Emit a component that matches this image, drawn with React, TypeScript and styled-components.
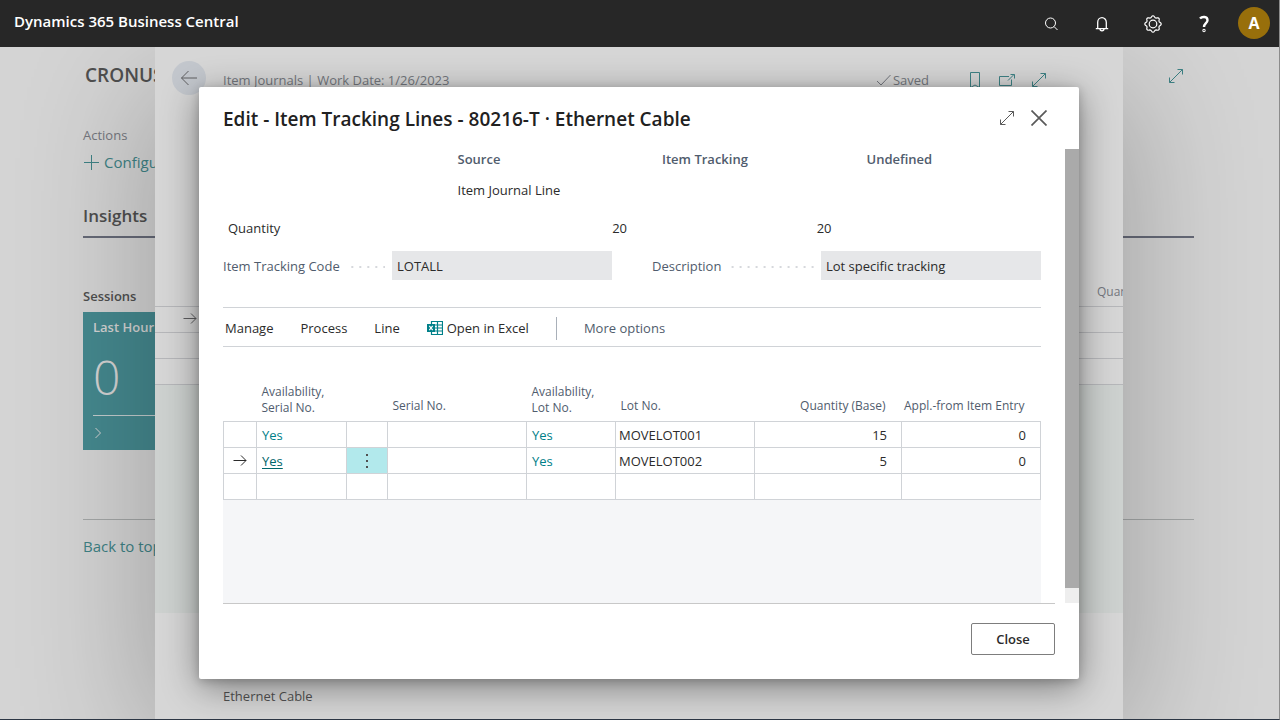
import React from "react";
import styled, { createGlobalStyle } from "styled-components";

const GlobalStyle = createGlobalStyle`
  *, *::before, *::after { box-sizing: border-box; }
  body { margin: 0; background: #d4d4d4; }
  body, button, input, table { font-family: "Open Sans", "Noto Sans", sans-serif; font-size: 13px; line-height: 20px; }
  h1, h2, h3, p { margin: 0; }
  svg { display: block; flex: none; }
`;

/* ---------- Shell ---------- */

const Shell = styled.div`
  display: flex;
  flex-direction: column;
  min-height: 100vh;
  border-right: 1px solid #8c8c8c;
  border-bottom: 1px solid #2c3644;
  color: #2b2b2b;
`;

const TopBar = styled.header`
  display: flex;
  align-items: center;
  justify-content: space-between;
  height: 47px;
  padding: 0 9px 0 14px;
  background: #272727;
  color: #fff;
`;

const Product = styled.h1`
  padding-bottom: 6px;
  font-size: 15px;
  font-weight: 600;
`;

const TopActions = styled.nav`
  display: flex;
  align-items: center;
  gap: 23px;
`;

const IconButton = styled.button<{ $size?: number }>`
  display: flex;
  align-items: center;
  justify-content: center;
  width: ${(p) => p.$size ?? 28}px;
  height: ${(p) => p.$size ?? 28}px;
  padding: 0;
  border: 0;
  background: none;
  color: inherit;
`;

const Avatar = styled.button`
  width: 32px;
  height: 32px;
  margin: 0 0 2px -3px;
  padding: 0;
  border: 0;
  border-radius: 50%;
  background: #986f0b;
  color: #fff;
  font-size: 16px;
  font-weight: 700;
`;

const Stage = styled.div`
  position: relative;
  flex: 1;
  overflow: hidden;
`;

/* ---------- Role center ---------- */

const Home = styled.div`
  min-height: 672px;
  padding: 16px 85px 0 83px;
  background: #d4d4d4;
`;

const HomeHead = styled.div`
  display: flex;
  justify-content: space-between;
  align-items: center;
  padding: 0 6px 0 2px;
  color: #3e8285;
`;

const Company = styled.h2`
  padding-bottom: 2px;
  color: #4f4f4f;
  font-size: 19px;
  font-weight: 600;
  line-height: 24px;
`;

const ActionsLabel = styled.p`
  margin-top: 36px;
  color: #74777e;
`;

const HomeLink = styled.a`
  display: flex;
  align-items: center;
  gap: 5px;
  width: max-content;
  color: #3e8285;
  font-size: 15px;
  line-height: 24px;
  text-decoration: none;
`;

const ConfigureLink = styled(HomeLink)`
  margin-top: 5px;
`;

const Insights = styled.h3`
  margin-top: 30px;
  padding-bottom: 8px;
  border-bottom: 2px solid #666a78;
  color: #4f4f4f;
  font-size: 17px;
  font-weight: 600;
  line-height: 24px;
`;

const TileLabel = styled.p`
  margin-top: 48px;
  color: #4f4f4f;
  font-weight: 600;
`;

const Tile = styled.div`
  width: 140px;
  height: 138px;
  margin-top: 6px;
  padding: 5px 0 0 10px;
  background: #45898f;
  color: #d4d4d4;
`;

const TileTitle = styled.p`
  font-weight: 600;
`;

const TileValue = styled.p`
  height: 79px;
  border-bottom: 1px solid #c3cdce;
  font-size: 48px;
  font-weight: 300;
  line-height: 80px;
`;

const TileMore = styled.div`
  padding-top: 10px;
`;

const HomeFoot = styled.div`
  margin-top: 69px;
  padding-top: 14px;
  border-top: 1px solid #a4a7a7;
`;

/* ---------- Journal sheet behind the dialog ---------- */

const Sheet = styled.section`
  position: absolute;
  inset: 0 156px 0 155px;
  overflow: hidden;
  background: #d6d6d6;
`;

const SheetShadow = styled.div`
  position: absolute;
  inset: 40px 156px 0 155px;
  box-shadow: 0 10px 120px 10px rgba(0, 0, 0, 0.24);
`;

const SheetHead = styled.div`
  display: flex;
  align-items: center;
  height: 34px;
  margin-top: 14px;
  padding: 0 76px 0 17px;
  color: #73767d;
`;

const BackButton = styled(IconButton)`
  margin-right: 17px;
  border-radius: 50%;
  background: #c3c7cd;
  color: #5e5e60;
`;

const SheetTitle = styled.h2`
  flex: 1;
  padding-top: 4px;
  font-size: 13px;
  font-weight: 400;
`;

const Saved = styled.span`
  display: flex;
  align-items: center;
  gap: 2px;
  padding-top: 4px;
`;

const SheetTools = styled.div`
  display: flex;
  gap: 16px;
  margin-left: 38px;
  padding-top: 4px;
  color: #3e8285;
`;

const SheetTable = styled.table`
  width: 100%;
  margin-top: 179px;
  border-collapse: collapse;
  table-layout: fixed;

  th {
    height: 32px;
    padding: 4px 0 0 19px;
    color: #74777e;
    font-size: 12px;
    font-weight: 400;
    text-align: left;
    white-space: nowrap;
  }
  td {
    height: 26px;
    padding: 0 0 0 28px;
    border: 1px solid #b6b7ba;
    border-width: 1px 0;
    color: #5e5e60;
  }
`;

const SheetFiller = styled.div`
  height: 228px;
  background: #cdd1cf;
`;

const SheetFoot = styled.p`
  padding: 73px 0 0 68px;
  color: #525252;
`;

/* ---------- Dialog ---------- */

const Dialog = styled.section`
  position: absolute;
  inset: 40px 200px auto 199px;
  background: #fff;
  border-radius: 2px;
  box-shadow: 0 8px 36px rgba(0, 0, 0, 0.42), 0 2px 10px rgba(0, 0, 0, 0.2);
`;

const DialogHead = styled.div`
  display: flex;
  align-items: center;
  height: 62px;
  padding: 0 25px 0 24px;
`;

const DialogTitle = styled.h2`
  flex: 1;
  padding-top: 2px;
  color: #212121;
  font-size: 19px;
  font-weight: 600;
  line-height: 24px;
`;

const DialogTools = styled.div`
  display: flex;
  gap: 2px;
  color: #5a5a5a;
`;

const DialogScroll = styled.div`
  display: flex;
`;

const DialogBody = styled.div`
  flex: 1;
  min-width: 0;
  padding: 0 24px;
`;

const ScrollTrack = styled.div`
  display: flex;
  width: 14px;
  padding-bottom: 15px;
  background: #eee;
`;

const ScrollThumb = styled.div`
  flex: 1;
  background: #aaa;
`;

const Matrix = styled.table`
  width: 100%;
  border-collapse: collapse;
  table-layout: fixed;

  th, td { padding: 0 5px 0 30px; text-align: left; }
  th { color: #505c6d; font-weight: 600; }
  tbody th { padding-left: 5px; color: #2b2b2b; font-weight: 400; }
`;

const MatrixRow = styled.tr<{ $height: number }>`
  height: ${(p) => p.$height}px;
`;

const MatrixNumber = styled.td`
  && { text-align: right; }
`;

const Fields = styled.div`
  display: grid;
  grid-template-columns: 1fr 1fr;
  gap: 40px;
  margin-top: 7px;
`;

const Field = styled.div`
  display: flex;
  align-items: center;
`;

const FieldLabel = styled.label`
  color: #505c6d;
`;

const Leader = styled.span`
  flex: 1;
  height: 2px;
  margin: 2px 7px 0 8px;
  background: linear-gradient(to left, #d6d8dc 2px, transparent 2px) right top / 8px 2px repeat-x;
`;

const FieldInput = styled.input`
  width: 220px;
  height: 29px;
  padding: 0 5px;
  border: 0;
  border-radius: 0;
  outline: 0;
  background: #e6e7e9;
  color: #2b2b2b;
`;

const Toolbar = styled.div`
  display: flex;
  align-items: center;
  gap: 27px;
  height: 40px;
  margin-top: 27px;
  padding: 2px 0 0 2px;
  border: 1px solid #d0d3d7;
  border-width: 1px 0;
`;

const ToolButton = styled.button<{ $muted?: boolean }>`
  display: flex;
  align-items: center;
  gap: 4px;
  padding: 0;
  border: 0;
  background: none;
  color: ${(p) => (p.$muted ? "#505c6d" : "#2b2b2b")};
`;

const Divider = styled.span`
  width: 1px;
  height: 23px;
  background: #a9b0b9;
`;

const LinesArea = styled.div`
  min-height: 256px;
  background: #f5f6f8;
`;

const Lines = styled.table`
  width: 100%;
  border-collapse: collapse;
  table-layout: fixed;
  background: #fff;
`;

const HeadCell = styled.th<{ $end?: boolean; $tall?: boolean }>`
  height: 74px;
  padding: 0 ${(p) => (p.$end ? 16 : 0)}px ${(p) => (p.$tall ? 5 : 7)}px ${(p) => (p.$end ? 0 : 5)}px;
  color: #505c6d;
  font-size: 12px;
  font-weight: 400;
  line-height: 16px;
  text-align: ${(p) => (p.$end ? "right" : "left")};
  vertical-align: bottom;
  white-space: nowrap;
`;

const Cell = styled.td<{ $end?: boolean; $pad?: number; $active?: boolean }>`
  height: 26px;
  padding: 1px ${(p) => (p.$end ? 14 : 0)}px 0 ${(p) => p.$pad ?? 5}px;
  border: 1px solid #d0d3d7;
  background: ${(p) => (p.$active ? "#b2e9ec" : "#fff")};
  text-align: ${(p) => (p.$end ? "right" : "left")};
`;

const YesLink = styled.a<{ $focused?: boolean }>`
  color: ${(p) => (p.$focused ? "#00666a" : "#008089")};
  text-decoration: ${(p) => (p.$focused ? "underline" : "none")};
  text-underline-offset: 2px;
`;

const RowMenu = styled(IconButton)`
  width: 100%;
  height: 22px;
  color: #505050;
`;

const DialogFoot = styled.div`
  display: flex;
  justify-content: flex-end;
  margin: 0 24px;
  padding: 19px 0 24px;
  border-top: 1px solid #c8c8c8;
`;

const CloseButton = styled.button`
  width: 84px;
  height: 32px;
  padding: 0;
  border: 1px solid #7d7d7d;
  border-radius: 2px;
  background: #fff;
  color: #2b2b2b;
  font-weight: 600;
`;

/* ---------- Icons ---------- */

type IconProps = { w?: number; h?: number; sw?: number; children: React.ReactNode };

const Icon = ({ w = 16, h = 16, sw = 1, children }: IconProps) => (
  <svg width={w} height={h} viewBox={`0 0 ${w} ${h}`} fill="none" stroke="currentColor" strokeWidth={sw} aria-hidden="true">
    {children}
  </svg>
);

const ExpandIcon = () => (
  <Icon>
    <path d="M1.5 14.5 14.5 1.5M9.5 1.5h5v5M1.5 9.5v5h5" />
  </Icon>
);

const ArrowRight = () => (
  <Icon w={14} h={12}>
    <path d="M.5 5.500h12.500M8 .5l5 5-5 5" />
  </Icon>
);

const gearPath = (() => {
  const steps = 64;
  const points = Array.from({ length: steps }, (_, i) => {
    const angle = (i / steps) * Math.PI * 2;
    const radius = 7.4 + 0.75 * Math.tanh(2.2 * Math.cos(angle * 8));
    return `${(9 + radius * Math.cos(angle)).toFixed(2)} ${(9 + radius * Math.sin(angle)).toFixed(2)}`;
  });
  return `M${points.join("L")}Z`;
})();

const ExcelIcon = () => (
  <svg width="16" height="14" viewBox="0 0 16 14" aria-hidden="true">
    <path d="M4.500 .5h11v13h-11zM4.500 4h11M4.500 7h11M4.500 10h11M10.500 .5v13" fill="none" stroke="#008089" strokeWidth="1.200" />
    <path d="M0 3h8v8H0z" fill="#008089" />
    <path d="M2.300 4.800l3.400 4.400M5.700 4.800l-3.400 4.400" stroke="#fff" strokeWidth="1.200" />
  </svg>
);

/* ---------- Data ---------- */

const lines = [
  { lot: "MOVELOT001", quantity: "15", entry: "0", current: false },
  { lot: "MOVELOT002", quantity: "5", entry: "0", current: true },
];

const columnWidths = [33, 90, 41, 139, 89, 139, 147, 139];

export default function App() {
  return (
    <Shell>
      <GlobalStyle />
      <TopBar>
        <Product>Dynamics 365 Business Central</Product>
        <TopActions>
          <IconButton aria-label="Search">
            <Icon><circle cx="7.500" cy="7" r="5" /><path d="M11 10.500 14.500 14" /></Icon>
          </IconButton>
          <IconButton aria-label="Notifications">
            <Icon w={14} h={16} sw={1.3}>
              <path d="M2.700 12.500V6.300a4.300 4.700 0 0 1 8.600 0v6.200M.8 12.700h12.400M5 13a2 1.800 0 0 0 4 0" />
            </Icon>
          </IconButton>
          <IconButton aria-label="Settings">
            <Icon w={18} h={18} sw={1.2}><path d={gearPath} /><circle cx="9" cy="9" r="3.800" /></Icon>
          </IconButton>
          <IconButton aria-label="Help">
            <Icon w={12} h={18} sw={2.4}>
              <path d="M2 3.500C4 1.300 9.500 1.200 9.500 5.200 9.500 8 6 8.300 6 12" /><circle cx="6" cy="15.500" r=".5" />
            </Icon>
          </IconButton>
          <Avatar aria-label="Account">A</Avatar>
        </TopActions>
      </TopBar>

      <Stage>
        <Home>
          <HomeHead>
            <Company>CRONUS</Company>
            <IconButton aria-label="Expand page" $size={24}><ExpandIcon /></IconButton>
          </HomeHead>
          <ActionsLabel>Actions</ActionsLabel>
          <ConfigureLink href="#configure">
            <Icon><path d="M8.500 1v15M1 8.500h15" /></Icon>
            Configure
          </ConfigureLink>
          <Insights>Insights</Insights>
          <TileLabel>Sessions</TileLabel>
          <Tile>
            <TileTitle>Last Hour</TileTitle>
            <TileValue>0</TileValue>
            <TileMore><Icon w={10} h={14}><path d="M2.500 2l5 5-5 5" /></Icon></TileMore>
          </Tile>
          <HomeFoot><HomeLink href="#top">Back to top</HomeLink></HomeFoot>
        </Home>

        <SheetShadow />
        <Sheet>
          <SheetHead>
            <BackButton aria-label="Back" $size={34}>
              <Icon w={18} h={16}><path d="M17 8H1.500M8.500 1l-7 7 7 7" /></Icon>
            </BackButton>
            <SheetTitle>Item Journals | Work Date: 1/26/2023</SheetTitle>
            <Saved>
              <Icon w={15} h={14}><path d="M1 8l4 4L14.500 2" /></Icon>
              Saved
            </Saved>
            <SheetTools>
              <IconButton aria-label="Bookmark" $size={16}>
                <Icon><path d="M3.500 .5h9v15L8 13l-4.500 2.500z" /></Icon>
              </IconButton>
              <IconButton aria-label="Open in new window" $size={16}>
                <Icon><path d="M10 4.500H.5v9h12V7.500M9 8.500l6-6M11.500 2.500h4v4" /></Icon>
              </IconButton>
              <IconButton aria-label="Expand sheet" $size={16}><ExpandIcon /></IconButton>
            </SheetTools>
          </SheetHead>
          <SheetTable>
            <colgroup><col /><col width="45" /></colgroup>
            <thead><tr><th aria-label="Current row" /><th>Quantity</th></tr></thead>
            <tbody>
              <tr><td><ArrowRight /></td><td /></tr>
              <tr><td /><td /></tr>
              <tr><td /><td /></tr>
            </tbody>
          </SheetTable>
          <SheetFiller />
          <SheetFoot>Ethernet Cable</SheetFoot>
        </Sheet>

        <Dialog role="dialog" aria-labelledby="dialog-title">
          <DialogHead>
            <DialogTitle id="dialog-title">Edit - Item Tracking Lines - 80216-T · Ethernet Cable</DialogTitle>
            <DialogTools>
              <IconButton aria-label="Expand dialog" $size={30}><ExpandIcon /></IconButton>
              <IconButton aria-label="Close dialog" $size={30}>
                <Icon sw={1.7}><path d="M.5 .5l15 15M15.500 .5l-15 15" /></Icon>
              </IconButton>
            </DialogTools>
          </DialogHead>

          <DialogScroll>
            <DialogBody>
              <Matrix>
                <thead>
                  <MatrixRow $height={20}>
                    <td />
                    <th scope="col">Source</th>
                    <th scope="col">Item Tracking</th>
                    <th scope="col">Undefined</th>
                  </MatrixRow>
                </thead>
                <tbody>
                  <MatrixRow $height={42}><td /><td>Item Journal Line</td><td /><td /></MatrixRow>
                  <MatrixRow $height={33}>
                    <th scope="row">Quantity</th>
                    <MatrixNumber>20</MatrixNumber>
                    <MatrixNumber>20</MatrixNumber>
                    <td />
                  </MatrixRow>
                </tbody>
              </Matrix>

              <Fields>
                <Field>
                  <FieldLabel htmlFor="tracking-code">Item Tracking Code</FieldLabel>
                  <Leader />
                  <FieldInput id="tracking-code" readOnly value="LOTALL" />
                </Field>
                <Field>
                  <FieldLabel htmlFor="description">Description</FieldLabel>
                  <Leader />
                  <FieldInput id="description" readOnly value="Lot specific tracking" />
                </Field>
              </Fields>

              <Toolbar>
                <ToolButton>Manage</ToolButton>
                <ToolButton>Process</ToolButton>
                <ToolButton>Line</ToolButton>
                <ToolButton><ExcelIcon />Open in Excel</ToolButton>
                <Divider />
                <ToolButton $muted>More options</ToolButton>
              </Toolbar>

              <LinesArea>
                <Lines>
                  <colgroup>{columnWidths.map((width, i) => <col key={i} width={width} />)}</colgroup>
                  <thead>
                    <tr>
                      <HeadCell aria-label="Current row" />
                      <HeadCell $tall>Availability,<br />Serial No.</HeadCell>
                      <HeadCell aria-label="Row menu" />
                      <HeadCell>Serial No.</HeadCell>
                      <HeadCell $tall>Availability,<br />Lot No.</HeadCell>
                      <HeadCell>Lot No.</HeadCell>
                      <HeadCell $end>Quantity (Base)</HeadCell>
                      <HeadCell $end>Appl.-from Item Entry</HeadCell>
                    </tr>
                  </thead>
                  <tbody>
                    {lines.map((line) => (
                      <tr key={line.lot}>
                        <Cell $pad={9}>{line.current && <ArrowRight />}</Cell>
                        <Cell><YesLink href="#serial" $focused={line.current}>Yes</YesLink></Cell>
                        <Cell $pad={0} $active={line.current}>
                          {line.current && (
                            <RowMenu aria-label="Row actions">
                              <Icon w={2} h={14} sw={2}><path d="M1 0v2M1 6v2M1 12v2" /></Icon>
                            </RowMenu>
                          )}
                        </Cell>
                        <Cell />
                        <Cell><YesLink href="#lot">Yes</YesLink></Cell>
                        <Cell $pad={3}>{line.lot}</Cell>
                        <Cell $end>{line.quantity}</Cell>
                        <Cell $end>{line.entry}</Cell>
                      </tr>
                    ))}
                    <tr>{columnWidths.map((_, i) => <Cell key={i} />)}</tr>
                  </tbody>
                </Lines>
              </LinesArea>
            </DialogBody>
            <ScrollTrack><ScrollThumb /></ScrollTrack>
          </DialogScroll>

          <DialogFoot><CloseButton>Close</CloseButton></DialogFoot>
        </Dialog>
      </Stage>
    </Shell>
  );
}
